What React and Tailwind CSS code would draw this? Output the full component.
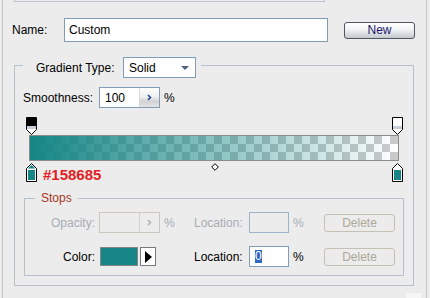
import React from "react";

const TEAL = "#158685";

function OpacityStop({ inner }) {
  return (
    <svg width="11" height="18" viewBox="0 0 11 18" className="block">
      <path d="M0.5 0.5H10.5V12.5L5.5 17.5L0.5 12.5Z" fill="#ffffff" stroke="#000000" />
      <rect x="1" y="1" width="9" height="8" fill={inner} />
      <rect x="1" y="9" width="9" height="3" fill="#c9ced6" />
    </svg>
  );
}

function ColorStop({ selected }) {
  return (
    <svg width="11" height="19" viewBox="0 0 11 19" className="block">
      <path d="M5.5 0.5L10.5 5.5V18.5H0.5V5.5Z" fill="#ffffff" stroke="#000000" />
      {selected && <path d="M5.5 1.9L9.3 5.5H1.7Z" fill={TEAL} />}
      <rect x="2" y="7" width="7" height="10" fill={TEAL} />
    </svg>
  );
}

function Chevron({ color }) {
  return (
    <svg width="5" height="7" viewBox="0 0 5 7" className="block">
      <path d="M1 1L3.5 3.5L1 6" fill="none" stroke={color} strokeWidth="1.6" />
    </svg>
  );
}

export default function App() {
  return (
    <div className="w-[430px] h-[298px] bg-[#ececec] overflow-hidden font-['Liberation_Sans',Arial,sans-serif] text-[12px] leading-[14px] text-black">
      <div className="ml-[2px] w-[425px] h-[298px] border-x border-[#c4c4c4]">
        {/* previous box bottom */}
        <div className="ml-[11px] w-[311px] h-[2px] border-x border-b border-[#bcc3cc]" />

        {/* Name row */}
        <div className="mt-[16px] h-[24px] pl-[9px] flex items-center">
          <div className="w-[52px]">Name:</div>
          <div className="w-[264px] h-[24px] border border-[#7f9db9] bg-white pl-[4px] flex items-center">
            Custom
          </div>
          <div className="ml-[16px] w-[71px] h-[17px] rounded-[3px] border border-[#4f5661] bg-[linear-gradient(to_bottom,#ffffff_0%,#f1f2f4_45%,#d3d7dc_80%,#c4c9cf_100%)] flex items-center justify-center text-[#17176b]">
            New
          </div>
        </div>

        {/* Outer fieldset */}
        <fieldset className="mt-[11px] ml-[11px] w-[400px] border border-[#b7bfca] pb-[9px]">
          <legend className="ml-[8px] pt-[4px] pl-[13px] pr-[5px]">
            <div className="flex items-center h-[21px]">
              <span className="w-[87px]">Gradient Type:</span>
              <div className="w-[73px] h-[21px] border border-[#7f9db9] bg-white pl-[5px] flex items-center">
                <span>Solid</span>
                <svg width="8" height="4" viewBox="0 0 8 4" className="ml-auto mr-[6px] block">
                  <path d="M0 0H8L4 4Z" fill="#4d6185" />
                </svg>
              </div>
            </div>
          </legend>

          {/* Smoothness */}
          <div className="mt-[9px] pl-[8px] h-[21px] flex items-center">
            <span className="w-[76px]">Smoothness:</span>
            <div className="w-[61px] h-[21px] border border-[#7f9db9] bg-white flex">
              <div className="flex-1 pl-[5px] flex items-center">100</div>
              <div className="w-[20px] h-full border-l border-[#d9dbde] bg-[linear-gradient(to_bottom,#fdfdfd_0%,#f0f0f0_45%,#d2d2d2_70%,#e4e4e4_100%)] flex items-center justify-center">
                <Chevron color="#23449a" />
              </div>
            </div>
            <span className="ml-[4px]">%</span>
          </div>

          {/* Gradient editor */}
          <div className="mt-[9px] relative">
            <div className="relative h-[18px]">
              <div className="absolute left-[11px] top-0">
                <OpacityStop inner="#000000" />
              </div>
              <div className="absolute left-[377px] top-0">
                <OpacityStop inner="#ffffff" />
              </div>
            </div>
            <div className="ml-[14px] w-[370px] h-[26px] border border-[#8c8c8c] bg-[repeating-conic-gradient(#cbcbcb_0_25%,#ffffff_0_50%)] bg-[length:16px_16px]">
              <div className="w-full h-full bg-[linear-gradient(to_right,rgba(21,134,133,1),rgba(21,134,133,0))]" />
            </div>
            <div className="relative h-[22px]">
              <div className="absolute left-[11px] top-[2px]">
                <ColorStop selected />
              </div>
              <div className="absolute left-[28px] top-[6px] text-[15px] leading-[15px] font-bold text-[#e31e24]">
                #158685
              </div>
              <svg width="8" height="8" viewBox="0 0 8 8" className="absolute left-[196px] top-[2px] block">
                <path d="M4 0.7L7.3 4L4 7.3L0.7 4Z" fill="#ffffff" stroke="#000000" />
              </svg>
              <div className="absolute left-[377px] top-[2px]">
                <ColorStop />
              </div>
            </div>
          </div>

          {/* Stops fieldset */}
          <fieldset className="mt-[8px] ml-[9px] w-[380px] border border-[#b7bfca] pb-[8px]">
            <legend className="ml-[10px] pl-[6px] pr-[6px] text-[#a6391e] leading-[14px]">Stops</legend>

            <div className="mt-[7px] h-[21px] flex items-center text-[#a9adb5]">
              <span className="w-[70px] text-right">Opacity:</span>
              <div className="ml-[4px] w-[61px] h-[21px] border border-[#cbc9bd] flex">
                <div className="flex-1" />
                <div className="w-[20px] h-full border-l border-[#d6d4ca] flex items-center justify-center">
                  <Chevron color="#b3b3b3" />
                </div>
              </div>
              <span className="w-[34px] pl-[4px]">%</span>
              <span className="w-[50px]">Location:</span>
              <div className="ml-[5px] w-[40px] h-[21px] border border-[#9db2cb]" />
              <span className="w-[35px] pl-[4px]">%</span>
              <div className="w-[71px] h-[18px] rounded-[3px] border border-[#c3c1b6] flex items-center justify-center text-[#aca899]">
                Delete
              </div>
            </div>

            <div className="mt-[13px] h-[21px] flex items-center">
              <span className="w-[70px] text-right">Color:</span>
              <div className="ml-[4px] w-[61px] h-[21px] flex items-center">
                <div className="ml-[1px] w-[38px] h-[19px] border border-[#848484] bg-[#158685]" />
                <div className="ml-[2px] w-[16px] h-[19px] border border-[#7a7a7a] bg-white flex items-center justify-center">
                  <svg width="7" height="12" viewBox="0 0 7 12" className="block">
                    <path d="M0 0L7 6L0 12Z" fill="#000000" />
                  </svg>
                </div>
              </div>
              <span className="w-[34px] pl-[4px]" />
              <span className="w-[50px]">Location:</span>
              <div className="ml-[5px] w-[40px] h-[21px] border border-[#7f9db9] bg-white pl-[5px] flex items-center">
                <span className="h-[13px] leading-[13px] bg-[#316ac5] text-white">0</span>
              </div>
              <span className="w-[35px] pl-[4px]">%</span>
              <div className="w-[71px] h-[18px] rounded-[3px] border border-[#c3c1b6] flex items-center justify-center text-[#aca899]">
                Delete
              </div>
            </div>
          </fieldset>
        </fieldset>

        <div className="mt-[7px] flex justify-end pr-[5px]">
          <div className="w-[15px] h-[5px] bg-[#f6f6f6]" />
        </div>
      </div>
    </div>
  );
}
